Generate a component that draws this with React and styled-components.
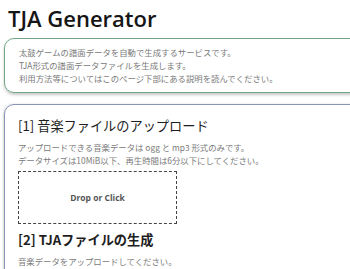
import React from 'react'
import styled, { createGlobalStyle } from 'styled-components'

const GlobalStyle = createGlobalStyle`
  html, body {
    margin: 0;
    padding: 0;
    background: #fff;
    overflow: hidden;
  }
  body {
    font-family: "Noto Sans CJK JP", "Noto Sans", sans-serif;
  }
`

const Page = styled.div`
  width: 350px;
  height: 269px;
  overflow: hidden;
  padding: 6px 0 0 4px;
  box-sizing: border-box;
`

const Title = styled.h1`
  margin: 0 0 8px 4px;
  font-family: "Open Sans", "Noto Sans", sans-serif;
  font-size: 22px;
  line-height: 24px;
  font-weight: 600;
  color: #151515;
`

const Box = styled.section`
  margin-right: -20px;
  border: 1px solid ${props => props.Color};
  border-radius: 10px;
  box-shadow: ${props => props.Shadow ? '0 2px 3px rgba(0, 0, 0, 0.22)' : '-1px 0 2px rgba(0, 0, 0, 0.15)'};
  padding: ${props => props.Pad};
  margin-bottom: 11px;
`

const Text = styled.p`
  margin: 0;
  font-size: 8.4px;
  line-height: 13px;
  color: #7a7a7a;
  white-space: nowrap;
`

const Heading = styled.h2`
  margin: 0 0 6px;
  font-size: 13.2px;
  line-height: 18px;
  font-weight: ${props => props.Bold ? 700 : 400};
  color: #1e1e1e;
`

const Drop = styled.div`
  width: 159px;
  height: 53px;
  box-sizing: border-box;
  margin: 4px 0 7px;
  border: 1px dashed #444;
  display: flex;
  align-items: center;
  justify-content: center;
  font-family: "Open Sans", sans-serif;
  font-size: 8.5px;
  font-weight: 700;
  color: #555;
`

export default function App() {
  return (
    <Page>
      <GlobalStyle />
      <Title>TJA Generator</Title>
      <Box Color="#72a687" Shadow Pad="7px 14px 7px">
        <Text>太鼓ゲームの譜面データを自動で生成するサービスです。</Text>
        <Text>TJA形式の譜面データファイルを生成します。</Text>
        <Text>利用方法等についてはこのページ下部にある説明を読んでください。</Text>
      </Box>
      <Box Color="#8894b6" Pad="12px 13px 12px">
        <Heading>[1] 音楽ファイルのアップロード</Heading>
        <Text>アップロードできる音楽データは ogg と mp3 形式のみです。</Text>
        <Text>データサイズは10MiB以下、再生時間は6分以下にしてください。</Text>
        <Drop>Drop or Click</Drop>
        <Heading Bold>[2] TJAファイルの生成</Heading>
        <Text>音楽データをアップロードしてください。</Text>
      </Box>
    </Page>
  )
}
